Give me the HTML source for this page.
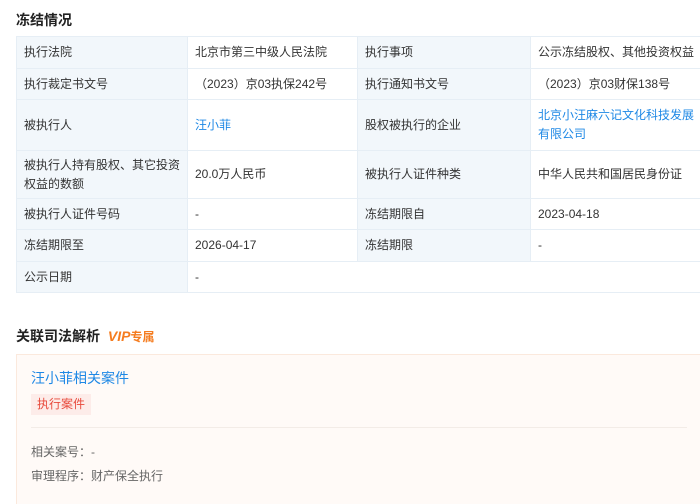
<!DOCTYPE html>
<html><head><meta charset="utf-8"><style>
*{margin:0;padding:0;box-sizing:border-box}
body{width:700px;height:492px;overflow:hidden;background:#fff;font-family:"Liberation Sans","Noto Sans CJK SC",sans-serif;color:#333;font-size:12px;position:relative}
.h{position:absolute;left:16px;font-size:14px;font-weight:bold;color:#222}
table{position:absolute;left:16px;top:36px;border-collapse:collapse;width:700px;table-layout:fixed}
td{border:1px solid #e6eef5;padding:0 7px;line-height:19px;vertical-align:middle}
td.l{background:#f2f7fb;color:#333}
td.r{padding-right:16px}
a{color:#1e88e5;text-decoration:none}
.card{position:absolute;left:16px;top:354px;width:700px;height:150px;background:#fffaf7;border-top:1px solid #fbe9dd;border-left:1px solid #fbe9dd}
</style></head><body>
<div class="h" style="top:10px">冻结情况</div>
<table>
<colgroup><col style="width:171px"><col style="width:170px"><col style="width:173px"><col style="width:186px"></colgroup>
<tr style="height:32px"><td class="l">执行法院</td><td>北京市第三中级人民法院</td><td class="l">执行事项</td><td class="r">公示冻结股权、其他投资权益</td></tr>
<tr style="height:31px"><td class="l">执行裁定书文号</td><td>（2023）京03执保242号</td><td class="l">执行通知书文号</td><td class="r">（2023）京03财保138号</td></tr>
<tr style="height:51px"><td class="l">被执行人</td><td><a>汪小菲</a></td><td class="l">股权被执行的企业</td><td class="r"><a>北京小汪麻六记文化科技发展有限公司</a></td></tr>
<tr style="height:48px"><td class="l">被执行人持有股权、其它投资权益的数额</td><td>20.0万人民币</td><td class="l">被执行人证件种类</td><td class="r">中华人民共和国居民身份证</td></tr>
<tr style="height:31px"><td class="l">被执行人证件号码</td><td>-</td><td class="l">冻结期限自</td><td class="r">2023-04-18</td></tr>
<tr style="height:32px"><td class="l">冻结期限至</td><td>2026-04-17</td><td class="l">冻结期限</td><td class="r">-</td></tr>
<tr style="height:31px"><td class="l">公示日期</td><td colspan="3">-</td></tr>
</table>
<div class="h" style="top:326px">关联司法解析 <span style="color:#f57c1f;font-style:italic;font-weight:900;margin-left:4px">VIP</span><span style="color:#f57c1f;font-size:12px">专属</span></div>
<div class="card">
<div style="position:absolute;left:14px;top:13px;font-size:14px;color:#1e88e5">汪小菲相关案件</div>
<div style="position:absolute;left:14px;top:39px;height:21px;line-height:21px;padding:0 6px;background:#fdece9;color:#e84a3c">执行案件</div>
<div style="position:absolute;left:14px;top:72px;width:656px;border-top:1px solid #f3ece7"></div>
<div style="position:absolute;left:14px;top:88px;color:#666">相关案号：-</div>
<div style="position:absolute;left:14px;top:112px;color:#666">审理程序：财产保全执行</div>
</div>
</body></html>
